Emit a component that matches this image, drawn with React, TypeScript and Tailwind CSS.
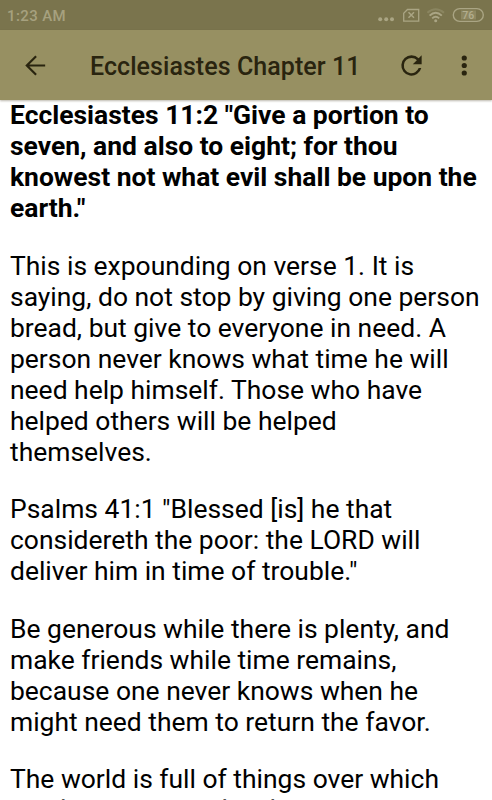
import React from "react";

const paragraphs: { bold?: boolean; lines: string[] }[] = [
  { bold: true, lines: ['Ecclesiastes 11:2 "Give a portion to', "seven, and also to eight; for thou", "knowest not what evil shall be upon the", 'earth."'] },
  { lines: ["This is expounding on verse 1. It is", "saying, do not stop by giving one person", "bread, but give to everyone in need. A", "person never knows what time he will", "need help himself. Those who have", "helped others will be helped", "themselves."] },
  { lines: ['Psalms 41:1 "Blessed [is] he that', "considereth the poor: the LORD will", 'deliver him in time of trouble."'] },
  { lines: ["Be generous while there is plenty, and", "make friends while time remains,", "because one never knows when he", "might need them to return the favor."] },
  { lines: ["The world is full of things over which"] },
];

function StatusBar() {
  return (
    <div className="flex h-[30px] shrink-0 items-center justify-between bg-[#7a744d] pl-[7px] pr-[7px] text-[#a6a17f]">
      <span className="pt-[3px] text-[15px] font-medium leading-none tracking-[0.4px]">1:23 AM</span>
      <svg width="108" height="20" viewBox="378 5 108 20" fill="none" stroke="#aaa584">
        <g fill="#aaa584" stroke="none">
          <circle cx="381.2" cy="19.3" r="2" />
          <circle cx="387.2" cy="19.3" r="2" />
          <circle cx="393" cy="19.3" r="2" />
        </g>
        <path d="M408.5 9.5H419.7V21.2H404.7V13.3Z" strokeWidth="1.3" />
        <path d="M409.5 12.3L415 17.8M415 12.3L409.5 17.8" strokeWidth="1.5" />
        <path d="M428.4 12.8Q436.7 5.8 445 12.8" strokeWidth="2" opacity=".35" />
        <path d="M430.6 15.6Q436.7 9.8 442.8 15.6" strokeWidth="2" />
        <path d="M433.2 18.4Q436.7 15.2 440.2 18.4" strokeWidth="1.9" />
        <circle cx="436.7" cy="20.7" r="1.5" fill="#aaa584" stroke="none" />
        <rect x="454.3" y="8.6" width="30" height="12.8" rx="6.4" strokeWidth="1.4" />
        <rect x="462" y="10.5" width="15" height="9" fill="#8d8761" stroke="none" />
        <text x="469.3" y="18.8" textAnchor="middle" fill="#b3ae8e" stroke="none" fontSize="10.5" fontWeight="500">76</text>
      </svg>
    </div>
  );
}

function AppBar() {
  return (
    <header className="z-10 flex h-[70px] shrink-0 items-center bg-[#979062] text-[#29240f] shadow-[0_1px_2px_rgba(60,50,20,0.35)]">
      <svg className="ml-[21px] shrink-0" width="29" height="29" viewBox="0 0 24 24" fill="none" stroke="currentColor" strokeWidth="1.8">
        <path d="M20 12H4.8M12.5 4.3L4.8 12L12.5 19.7" />
      </svg>
      <h1 className="ml-10 w-[295px] whitespace-nowrap pt-[2px] text-[25px] font-medium leading-none tracking-[0.06px]">Ecclesiastes Chapter 11</h1>
      <svg className="ml-3 shrink-0" width="29" height="29" viewBox="0 0 24 24" fill="currentColor">
        <path d="M17.65 6.35A7.96 7.96 0 0 0 12 4a8 8 0 1 0 7.73 10h-2.08A6 6 0 1 1 12 6c1.66 0 3.14.69 4.22 1.78L13 11h7V4z" transform="translate(-.6 -.6) scale(1.05)" />
      </svg>
      <svg className="ml-6 shrink-0" width="29" height="29" viewBox="0 0 24 24" fill="currentColor">
        <circle cx="11.8" cy="5.8" r="2.15" />
        <circle cx="11.8" cy="12" r="2.15" />
        <circle cx="11.8" cy="18.2" r="2.15" />
      </svg>
    </header>
  );
}

export default function App() {
  return (
    <div className="flex h-[800px] w-[492px] flex-col overflow-hidden bg-white font-['Roboto',sans-serif]">
      <StatusBar />
      <AppBar />
      <main className="-mt-px flex min-h-0 flex-1 flex-col gap-[26.5px] overflow-hidden pl-2.5 text-[26.45px] leading-[31px] text-black">
        {paragraphs.map((p, i) => (
          <p key={i} className={p.bold ? "shrink-0 font-bold" : "shrink-0"}>
            {p.lines.map((line) => (
              <span key={line} className="block whitespace-nowrap">{line}</span>
            ))}
            {i === paragraphs.length - 1 && (
              <span className="-mt-px block whitespace-nowrap text-neutral-600">one has no control so he</span>
            )}
          </p>
        ))}
      </main>
    </div>
  );
}
